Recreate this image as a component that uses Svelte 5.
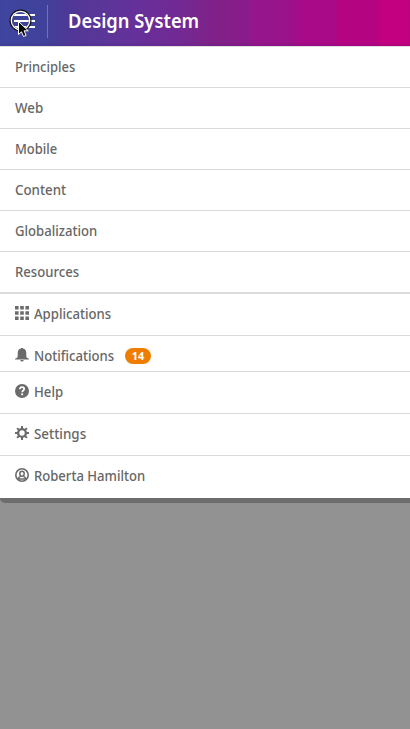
<script>
  const sections = ['Principles', 'Web', 'Mobile', 'Content', 'Globalization', 'Resources'];
  const widths = { Principles: 60, Web: 28, Mobile: 42, Content: 51, Globalization: 82, Resources: 64 };
  const tools = [
    { name: 'Applications', icon: 'grid', width: 77 },
    { name: 'Notifications', icon: 'bell', width: 80, badge: 14 },
    { name: 'Help', icon: 'help', width: 29 },
    { name: 'Settings', icon: 'gear', width: 52 },
    { name: 'Roberta Hamilton', icon: 'user', width: 111 }
  ];

  // Condenses a label to the given width
  function fit(node, width) {
    const natural = node.getBoundingClientRect().width;
    node.style.transform = `scaleX(${(width + 0.2) / natural})`;
    node.parentElement.style.width = `${width}px`;
  }
</script>

<div class="screen">
  <header>
    <button aria-label="Menu">
      <svg width="47" height="46" viewBox="0 0 47 46">
        <path d="M14 15h21M14 21h21M14 27h21" stroke="#fff" stroke-width="2" />
        <circle cx="20.500" cy="20.500" r="9.700" fill="none" stroke="#11111c" stroke-width="2.600" />
        <circle cx="20.500" cy="20.500" r="9.200" fill="none" stroke="#fff" stroke-width="1.300" />
        <path d="M18.500 21.500v13l3-2.700 2 4.700 2.600-1.100-2-4.600h4.200z" fill="#080808" stroke="#fff" stroke-width="1" />
      </svg>
    </button>
    <i></i>
    <h1><span use:fit={131}>Design System</span></h1>
  </header>
  <nav>
    {#each sections as name}
      <a href="#top" class="row"><b class="label"><span use:fit={widths[name]}>{name}</span></b></a>
    {/each}
    <div class="tools">
      {#each tools as t}
        <a href="#top" class="row" class:short={t.badge}>
          <svg class="icon" width="14" height="14" viewBox="0 0 14 14">
            {#if t.icon === 'grid'}
              <path d="M0 0h3.600v3.600H0zM5.200 0h3.600v3.600H5.200zM10.400 0H14v3.600h-3.600zM0 5.200h3.600v3.600H0zM5.200 5.200h3.600v3.600H5.200zM10.400 5.200H14v3.600h-3.600zM0 10.400h3.600V14H0zM5.200 10.400h3.600V14H5.200zM10.400 10.400H14V14h-3.600z" />
            {:else if t.icon === 'bell'}
              <path d="M6 .5a1 1 0 0 1 2 0C10.300 1 11.300 2.700 11.300 5v3.200c0 1 .9 1.800 2.700 2.600v.7H0v-.7c1.800-.8 2.700-1.600 2.700-2.600V5C2.700 2.700 3.700 1 6 .5zM5.300 12h3.400a1.700 1.500 0 0 1-3.400 0z" />
            {:else if t.icon === 'help'}
              <circle cx="7" cy="7" r="7" />
              <path d="M4.900 5.200C4.900 3.800 5.800 3.200 7 3.200s2.200.7 2.200 1.900C9.200 6.600 7.200 6.500 7.200 8.300" fill="none" stroke="#fff" stroke-width="1.700" />
              <path d="M6.200 9.400h1.900v1.800H6.200z" fill="#fff" />
            {:else if t.icon === 'gear'}
              <circle cx="7" cy="7" r="3.900" fill="none" stroke="#6b6b6b" stroke-width="2.400" />
              <path d="M7 0v3M7 11v3M0 7h3M11 7h3M2.100 2.100l2 2M9.900 9.900l2 2M11.900 2.100l-2 2M4.100 9.900l-2 2" stroke="#6b6b6b" stroke-width="2" />
            {:else}
              <circle cx="7" cy="7" r="6.200" fill="none" stroke="#6b6b6b" stroke-width="1.600" />
              <ellipse cx="7" cy="5.700" rx="2.200" ry="2.500" fill="none" stroke="#6b6b6b" stroke-width="1.500" />
              <path d="M3.100 11.200c.2-1.800 1.100-2.300 2.500-2.800M10.900 11.200c-.2-1.800-1.100-2.300-2.500-2.800M3.400 11h7.200" fill="none" stroke="#6b6b6b" stroke-width="1.400" />
            {/if}
          </svg>
          <b class="label"><span use:fit={t.width}>{t.name}</span></b>
          {#if t.badge}<em>{t.badge}</em>{/if}
        </a>
      {/each}
    </div>
  </nav>
  <div class="edge"></div>
</div>

<style>
  :global(body) { background: #929292; }
  .screen {
    height: 729px;
    overflow: hidden;
    background: #929292;
    font-family: "Noto Sans", "Open Sans", sans-serif;
  }
  header {
    display: flex;
    align-items: center;
    height: 46px;
    border-bottom: 1px solid #dedede;
    background: linear-gradient(90deg, #3f459f 0, #404199 45px, #503797 72px, #5b3698 105px, #65309a 135px, #722993 180px, #812087 220px, #8a1b8c 249px, #96168c 253px, #9a128a 290px, #a80b88 302px, #aa0a87 334px, #b50482 340px, #b50482 376px, #c30080 381px, #c30080 410px);
    box-shadow: inset 0 -2px 2px #40207022;
  }
  button { width: 47px; height: 46px; padding: 0; border: 0; background: none; }
  button svg { display: block; }
  i { width: 1px; height: 33px; margin-top: -4px; background: #7770b4; }
  h1 { margin: -5px 0 0 20px; color: #fff; font-size: 20px; line-height: 28px; font-weight: 600; white-space: nowrap; }
  span { display: inline-block; transform-origin: left center; white-space: nowrap; }
  nav { background: #fff; }
  .row {
    display: flex;
    align-items: center;
    box-sizing: border-box;
    height: 41px;
    padding-left: 15px;
    border-bottom: 1px solid #dadada;
    color: #666;
    text-decoration: none;
  }
  .label { display: block; font-size: 14px; line-height: 20px; font-weight: 500; }
  .tools { border-top: 1px solid #dadada; }
  .tools .row { height: 42px; padding-bottom: 2px; }
  .tools .short { height: 36px; padding: 5px 0 0 15px; }
  .tools .row:last-child { border-bottom: 0; }
  .icon { flex: none; margin: -2px 5px 0 0; fill: #6b6b6b; }
  em {
    width: 26px;
    height: 16px;
    margin: -1px 0 0 11px;
    border-radius: 8px;
    background: #ef7d00;
    color: #fff;
    font-size: 11px;
    line-height: 16px;
    font-style: normal;
    font-weight: 700;
    text-align: center;
  }
  .edge { height: 5px; background: #6d6d6d; border-bottom-left-radius: 5px; }
</style>
